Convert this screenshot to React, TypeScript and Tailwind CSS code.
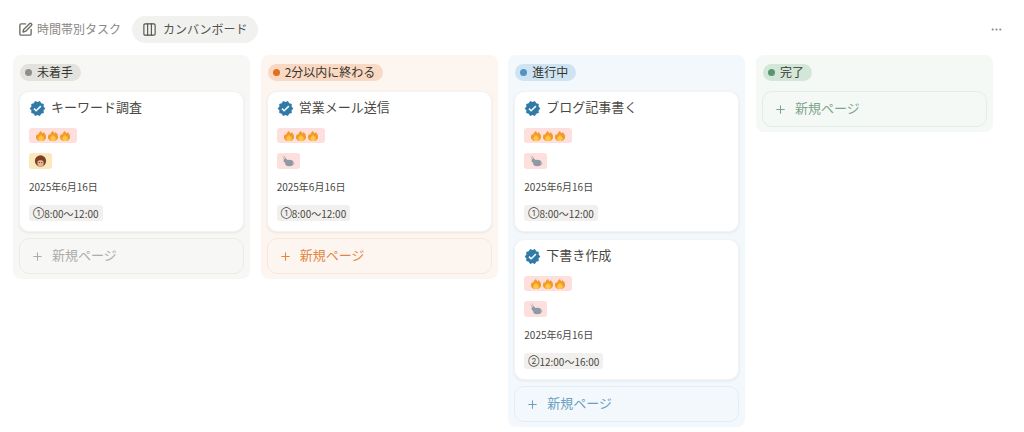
import { Columns3, Ellipsis, Plus, SquarePen } from 'lucide-react';
import { MdVerified } from 'react-icons/md';

const font = "font-['Noto_Sans_CJK_JP','Inter',sans-serif]";

function Flame() {
  return (
    <svg width="12" height="12" viewBox="-0.5 -0.5 13 13">
      <path d="M6 .5c.5 1.500 1.300 1.900 1.900 2.700.4-.4.6-.9.6-1.400C10.200 3 11.500 5 11.500 7c0 2.900-2.500 4.500-5.500 4.500S.5 9.900.5 7c0-1.400.7-2.500 1.500-3.300.1.600.3 1 .8 1.300C3 3.400 4.400 1.500 6 .5z" fill="#f6982a" />
      <path d="M6 5c.6 1.200 3 1.800 3 3.900 0 1.600-1.400 2.600-3 2.600S3 10.500 3 8.900C3 7 5.400 6.300 6 5z" fill="#fdc945" />
    </svg>
  );
}

function Face() {
  return (
    <svg width="13" height="13" viewBox="0 0 12 12">
      <circle cx="6" cy="5.500" r="5.200" fill="#7d4226" />
      <ellipse cx="6" cy="7.300" rx="2.900" ry="3" fill="#e9b796" />
      <path d="M3 6c1-1.600 5-1.600 6 0V3.500H3z" fill="#7d4226" />
      <circle cx="4.800" cy="7" r=".5" fill="#40210f" />
      <circle cx="7.200" cy="7" r=".5" fill="#40210f" />
    </svg>
  );
}

function Rabbit() {
  return (
    <svg width="14" height="14" viewBox="0 0 14 14">
      <path d="M2.500.5l3 4.500-1.200.8zM1 1.500l3 3.700-1 .8z" fill="#b0b3b6" />
      <circle cx="4.500" cy="6.800" r="2" fill="#8f99a3" />
      <ellipse cx="8.300" cy="9" rx="4.200" ry="3.200" fill="#8f99a3" />
      <circle cx="12.500" cy="9.500" r="1" fill="#b5bbbf" />
    </svg>
  );
}

interface Task {
  title: string;
  who: 'face' | 'rabbit';
  mark: string;
  time: string;
}

function TaskCard({ task }: { task: Task }) {
  return (
    <div className="flex h-[141px] flex-col rounded-[10px] bg-white pl-[10px] pt-[7px] shadow-[inset_0_0_0_1px_rgba(15,15,15,0.05),0_1px_3px_rgba(15,15,15,0.07)]">
      <div className="flex h-[20px] items-center gap-[5px]">
        <MdVerified size={17} className="text-[#2f7aa6]" />
        <span className="pb-[2px] text-[13px] leading-[20px] text-[#4a4843]">{task.title}</span>
      </div>
      <div className="mt-[10px] flex h-[15px] w-[48px] items-center justify-center rounded-[3px] bg-[#fde0dd]">
        <Flame />
        <Flame />
        <Flame />
      </div>
      <div
        className={
          task.who === 'face'
            ? 'mt-[10px] flex h-[16px] w-[23px] items-center justify-center rounded-[3px] bg-[#fbe9bd]'
            : 'mt-[10px] flex h-[16px] w-[23px] items-center justify-center rounded-[3px] bg-[#fde0dd]'
        }
      >
        {task.who === 'face' ? <Face /> : <Rabbit />}
      </div>
      <div className="mt-[11px] h-[16px] text-[10px] leading-[14px] text-[#4a4843]">2025年6月16日</div>
      <div className="mt-[9px] flex h-[16px] w-fit items-center rounded-[3px] bg-[#f1f0ee] px-[4px] text-[10px] text-[#4a4843]">
        <span className="font-['Inter'] text-[8px]">{task.mark}</span>
        {task.time}
      </div>
    </div>
  );
}

function NewPage({ className }: { className: string }) {
  return (
    <div className={`flex h-[36px] items-center gap-[8px] rounded-[10px] border pl-[11px] text-[13px] ${className}`}>
      <Plus size={13} strokeWidth={2} />
      <span className="pb-[2px]">新規ページ</span>
    </div>
  );
}

interface Col {
  name: string;
  bg: string;
  pill: string;
  dot: string;
  add: string;
  tasks: Task[];
}

const columns: Col[] = [
  {
    name: '未着手',
    bg: 'bg-[#f7f7f5]',
    pill: 'bg-[#e3e2de]',
    dot: 'bg-[#8f8e8a]',
    add: 'border-[#ebebe8] text-[#aeaca8]',
    tasks: [{ title: 'キーワード調査', who: 'face', mark: '①', time: '8:00〜12:00' }],
  },
  {
    name: '2分以内に終わる',
    bg: 'bg-[#fdf5ef]',
    pill: 'bg-[#f9d9c3]',
    dot: 'bg-[#e0701f]',
    add: 'border-[#f8e8dc] text-[#e28743]',
    tasks: [{ title: '営業メール送信', who: 'rabbit', mark: '①', time: '8:00〜12:00' }],
  },
  {
    name: '進行中',
    bg: 'bg-[#f3f8fc]',
    pill: 'bg-[#cfe4f3]',
    dot: 'bg-[#4f94c4]',
    add: 'border-[#e3edf4] text-[#6b9fc4]',
    tasks: [
      { title: 'ブログ記事書く', who: 'rabbit', mark: '①', time: '8:00〜12:00' },
      { title: '下書き作成', who: 'rabbit', mark: '②', time: '12:00〜16:00' },
    ],
  },
  {
    name: '完了',
    bg: 'bg-[#f5f9f6]',
    pill: 'bg-[#d3e7d9]',
    dot: 'bg-[#5a9470]',
    add: 'border-[#e4ece6] text-[#7ea58c]',
    tasks: [],
  },
];

export default function App() {
  return (
    <div className={`h-[432px] w-[1024px] overflow-hidden bg-white ${font}`}>
      <div className="flex h-[55px] items-start pl-[18px] pr-[21px] pt-[16px]">
        <div className="flex h-[27px] items-center gap-[4px] text-[12px] text-[#8a8883]">
          <SquarePen size={15} strokeWidth={2.2} className="text-[#6f6d68]" />
          <span className="pb-[1px]">時間帯別タスク</span>
        </div>
        <div className="ml-[11px] flex h-[27px] w-[126px] items-center gap-[6px] rounded-full bg-[#f1f1ef] pl-[10px] text-[12px] text-[#55534e]">
          <Columns3 size={15} strokeWidth={1.8} />
          <span className="pb-[1px]">カンバンボード</span>
        </div>
        <Ellipsis size={13} className="ml-auto mt-[7px] text-[#8a8883]" />
      </div>
      <div className="flex items-start gap-[10.670px] pl-[13px]">
        {columns.map((col) => (
          <div key={col.name} className={`flex w-[237px] flex-col rounded-[8px] px-[6px] pb-[5px] pt-[9px] ${col.bg}`}>
            <div className={`mb-[10px] ml-px flex h-[17px] w-fit items-center gap-[5px] rounded-full pl-[5px] pr-[8px] text-[12px] leading-[15px] text-[#37352f] ${col.pill}`}>
              <span className={`h-[7px] w-[7px] rounded-full ${col.dot}`} />
              <span className="pb-[2px]">{col.name}</span>
            </div>
            <div className="flex flex-col gap-[7px]">
              {col.tasks.map((t) => (
                <TaskCard key={t.title} task={t} />
              ))}
              <div className={col.tasks.length ? '-mt-px' : ''}>
                <NewPage className={col.add} />
              </div>
            </div>
          </div>
        ))}
      </div>
    </div>
  );
}
